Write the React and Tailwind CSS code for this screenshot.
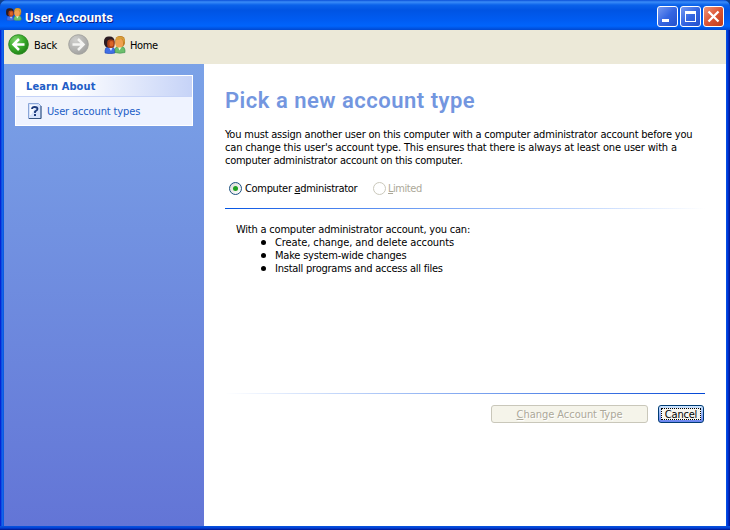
import React from "react";

const TAHOMA = "font-['DejaVu_Sans_Condensed','DejaVu_Sans',sans-serif]";

const ABILITIES = [
  { text: "Create, change, and delete accounts", track: "tracking-[-0.1px]" },
  { text: "Make system-wide changes", track: "tracking-[-0.21px]" },
  { text: "Install programs and access all files", track: "tracking-[-0.24px]" },
];

function Users({ className }) {
  return (
    <svg className={className} viewBox="0 0 22 18">
      <path d="M1 17V14.500Q1 11 4.500 11H7Q10.500 11 11 14.500V17Q6 18.500 1 17Z" fill="#3f6fe6" stroke="#2448b4" strokeWidth=".6" />
      <path d="M11 16.500V13.500Q11.500 10.500 14.500 10.500H17.500Q20.500 10.500 21 14V16.500Q16 18 11 16.500Z" fill="#6cbf6c" stroke="#3f8f50" strokeWidth=".6" />
      <path d="M5 11.500L7 15L8.500 11.500Z" fill="#dfe8ff" />
      <path d="M14 11L15.500 14.500L17.500 11Z" fill="#e8ffe8" />
      <rect x="0" y=".5" width="10.500" height="11" rx="4.500" fill="#2b1b22" />
      <rect x="3.200" y="3.600" width="7.400" height="8.400" rx="3.300" fill="#a8401a" />
      <rect x="5.500" y="5" width="3.800" height="5.500" rx="1.800" fill="#dc6428" />
      <rect x="11.300" y="0" width="9.700" height="11" rx="4.400" fill="#c07a22" />
      <rect x="11.600" y="2.800" width="7.400" height="8.800" rx="3.400" fill="#f0a050" />
      <path d="M11.500 4Q15.500 4 18 2.500Q20 5 19.800 7.500Q22 4 19 1.500Q15-.5 12.500 1.500Z" fill="#d8a03a" />
    </svg>
  );
}

function NavArrow({ forward }) {
  const id = forward ? "fwd" : "bck";
  return (
    <svg className="h-[22px] w-[22px] shrink-0" viewBox="0 0 22 22">
      <defs>
        <radialGradient id={id} cx=".35" cy=".28" r=".8">
          <stop offset="0" stopColor={forward ? "#cfcfcd" : "#7fd36c"} />
          <stop offset=".5" stopColor={forward ? "#b7b7b5" : "#3cae2c"} />
          <stop offset="1" stopColor={forward ? "#9f9f9d" : "#1c7c14"} />
        </radialGradient>
      </defs>
      <circle cx="10.500" cy="10.500" r="9.800" fill={`url(#${id})`} stroke={forward ? "#a3a39f" : "#2b8a22"} />
      <path
        d={forward ? "M4.500 10.500H15M10 5L15.500 10.500L10 16" : "M16.500 10.500H6M11 5L5.500 10.500L11 16"}
        fill="none" stroke={forward ? "#f4f4f2" : "#fff"} strokeWidth="2.500"
      />
    </svg>
  );
}

function CaptionButton({ kind }) {
  const close = kind === "close";
  return (
    <div className={`h-[21px] w-[21px] rounded-[3px] border border-white ${close ? "bg-linear-135 from-[#ee9478] via-[#dc5434] to-[#c03c18]" : "bg-linear-135 from-[#7698f0] via-[#3566e2] to-[#2450cc]"}`}>
      <svg className="block h-[19px] w-[19px]" viewBox="0 0 19 19" shapeRendering={close ? "auto" : "crispEdges"}>
        {kind === "min" && <rect x="4" y="12" width="7" height="3" fill="#fff" />}
        {kind === "max" && <path d="M4 4H15V15H4ZM5 7V14H14V7Z" fill="#fff" fillRule="evenodd" />}
        {close && <path d="M4.500 4.500L14.500 14.500M14.500 4.500L4.500 14.500" stroke="#fff" strokeWidth="2.300" />}
      </svg>
    </div>
  );
}

export default function App() {
  return (
    <div className="h-[530px] w-[730px] overflow-hidden bg-[#0f3f8c]">
      <div className={`flex h-full flex-col overflow-hidden rounded-t-[7px] bg-[#0046e0] text-[11px] leading-[13px] text-black ${TAHOMA}`}>
        <header className="flex h-[30px] shrink-0 items-center bg-[linear-gradient(to_bottom,#0a4fd8_0,#3a8cf8_2px,#0a62ea_5px,#0054e3_10px,#005cf2_20px,#0064fc_26px,#0048d0_30px)] pr-[6px] pl-[6px]">
          <Users className="mb-[1px] h-[13px] w-[16px]" />
          <h1 className="ml-[3px] grow pt-[4px] font-['Roboto',sans-serif] text-[13px] font-bold tracking-[0.2px] whitespace-nowrap text-white [text-shadow:1px_1px_#0a1883]">User Accounts</h1>
          <div className="flex gap-[2px] pt-[3px]">
            <CaptionButton kind="min" />
            <CaptionButton kind="max" />
            <CaptionButton kind="close" />
          </div>
        </header>
        <div className="flex min-h-0 grow bg-[linear-gradient(to_right,#0019cf_0,#0831d9_1px,#166aee_2px,#0855dd_4px,#0855dd_726px,#0046e8_727px,#0033d0_728px,#00138c_730px)] px-1">
          <div className="flex min-h-0 grow flex-col">
            <nav className="flex h-[34px] shrink-0 items-center bg-[#ece9d8] pb-[5px] pl-[4px]">
              <NavArrow />
              <span className="ml-[4px] w-[34px] pt-[2px] tracking-[-0.3px]">Back</span>
              <NavArrow forward />
              <Users className="ml-[14px] h-[18px] w-[22px]" />
              <span className="ml-[4px] pt-[2px] tracking-[-0.4px]">Home</span>
            </nav>
            <div className="flex min-h-0 grow">
              <aside className="w-[200px] shrink-0 bg-linear-to-b from-[#7ba2e7] to-[#6375d6] pt-[11px] pl-[11px]">
                <section className="h-[51px] w-[178px] border border-white bg-[#eff3ff] text-[#215dc6]">
                  <h2 className="h-[21px] border-b border-[#c6d3f7] bg-linear-to-r from-white from-30% to-[#c6d3f7] pt-[4px] pl-[10px] font-bold tracking-[0.1px]">Learn About</h2>
                  <a className="flex items-center pt-[6px] pl-[12px]">
                    <svg className="h-4 w-[14px]" viewBox="0 0 14 16">
                      <path d="M.5.500H10.500L13 3V15.500H.5Z" fill="#d6e2fa" stroke="#8aa6d8" />
                      <path d="M2 2H9L3 12H2Z" fill="#f6f9ff" />
                      <path d="M13 3V15.500H1" fill="none" stroke="#34527e" />
                      <path d="M4 6Q4 4 6.500 4Q9.500 4 9.500 6Q9.500 7.300 7 8.500V10" fill="none" stroke="#1c3a7c" strokeWidth="1.800" />
                      <rect x="6" y="11" width="2" height="2" fill="#1c3a7c" />
                    </svg>
                    <span className="ml-[5px] tracking-[-0.13px]">User account types</span>
                  </a>
                </section>
              </aside>
              <main className="flex grow flex-col bg-white pt-[24px] pl-[21px]">
                <h3 className="h-[24px] font-['Roboto',sans-serif] text-[22px] leading-[25px] font-semibold tracking-[0.5px] whitespace-nowrap text-[#7396df]">Pick a new account type</h3>
                <div className="mt-[16px] whitespace-nowrap">
                  <p className="tracking-[-0.21px]">You must assign another user on this computer with a computer administrator account before you</p>
                  <p className="tracking-[-0.17px]">can change this user's account type. This ensures that there is always at least one user with a</p>
                  <p className="tracking-[-0.26px]">computer administrator account on this computer.</p>
                </div>
                <div className="mt-[14px] flex h-[15px] items-center pl-[4px]">
                  <span className="flex h-[13px] w-[13px] items-center justify-center rounded-full border border-[#1c5180] bg-linear-135 from-[#dcdcd7] to-white"><i className="h-[5px] w-[5px] rounded-full bg-[#21a121]" /></span>
                  <span className="ml-[3px] w-[128px] tracking-[-0.32px]">Computer <u>a</u>dministrator</span>
                  <span className="h-[13px] w-[13px] rounded-full border border-[#cac8bb] bg-white" />
                  <span className="ml-[2px] tracking-[-0.45px] text-[#aca899]"><u>L</u>imited</span>
                </div>
                <div className="mt-[12px] h-px w-[480px] bg-linear-to-r from-[#0054e3] to-white" />
                <div className="mt-[14px] h-[170px] pl-[11px]">
                  <p className="tracking-[-0.21px]">With a computer administrator account, you can:</p>
                  {ABILITIES.map(({ text, track }) => (
                    <p key={text} className={`flex items-center pl-[25px] ${track}`}><i className="mr-[9px] h-[5px] w-[5px] rounded-full bg-black" />{text}</p>
                  ))}
                </div>
                <div className="h-px w-[480px] bg-linear-to-r from-white to-[#0046d5]" />
                <div className="mt-[11px] flex gap-[10px] pl-[266px]">
                  <button className="h-[18px] w-[157px] rounded-[3px] border border-[#c9c7ba] bg-[#f5f4ea] pt-px leading-[15px] tracking-[-0.04px] text-[#aca899] [text-shadow:1px_1px_#fff]"><u>C</u>hange Account Type</button>
                  <button className="h-[18px] w-[46px] rounded-[3px] border border-[#003c74] bg-linear-to-b from-[#cee7ff] to-[#6982ee] p-[2px]"><span className="block h-[12px] border border-dotted border-black bg-[#f6f5f0] leading-[11px] tracking-[-0.2px]">Cancel</span></button>
                </div>
              </main>
            </div>
          </div>
        </div>
        <footer className="h-1 shrink-0 bg-linear-to-b from-[#0855dd] via-[#0441d8] to-[#00138c]" />
      </div>
    </div>
  );
}
